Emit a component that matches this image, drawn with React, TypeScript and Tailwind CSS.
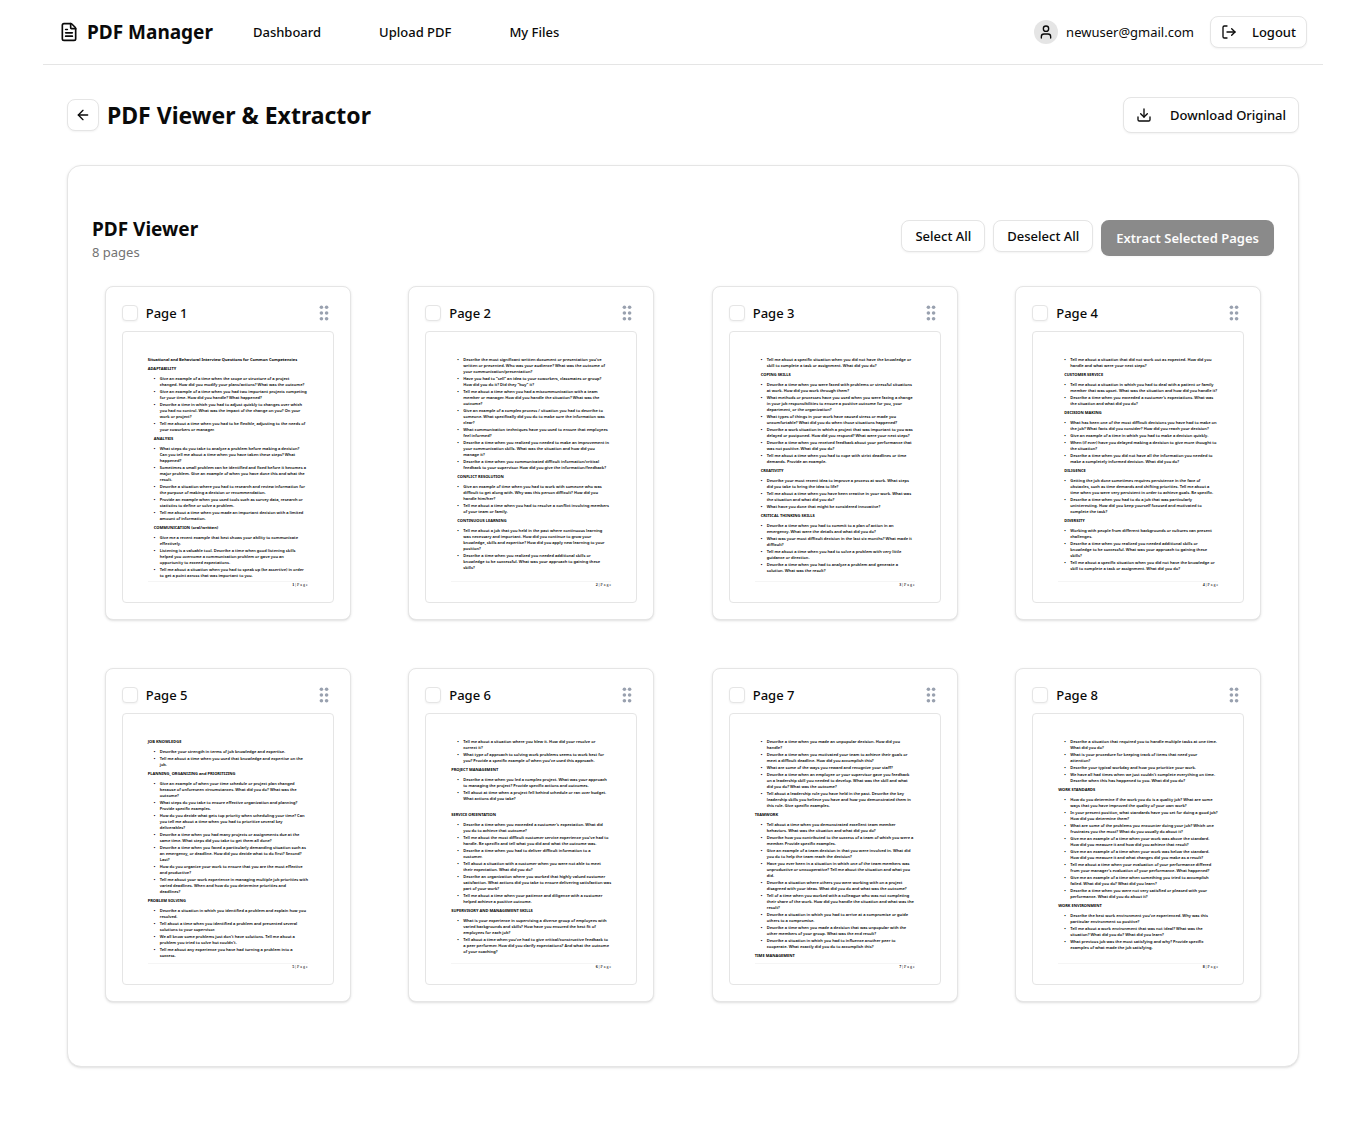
import { useState } from "react";
import { ArrowLeft, Download, FileText, LogOut, User } from "lucide-react";

type Block =
  | { kind: "heading"; text: string; indent?: boolean; spaced?: boolean }
  | { kind: "list"; items: string[][] };

type PageData = { number: number; blocks: Block[] };

const h = (text: string, indent = false, spaced = false): Block => ({ kind: "heading", text, indent, spaced });
const l = (...items: string[]): Block => ({ kind: "list", items: items.map((item) => item.split("\n")) });

const pages: PageData[] = [
  {
    number: 1,
    blocks: [
      h("Situational and Behavioral Interview Questions for Common Competencies"),
      h("ADAPTABILITY"),
      l(
        "Give an example of a time when the scope or structure of a project\nchanged. How did you modify your plans/actions? What was the outcome?",
        "Give an example of a time when you had two important projects competing\nfor your time. How did you handle? What happened?",
        "Describe a time in which you had to adjust quickly to changes over which\nyou had no control. What was the impact of the change on you? On your\nwork or project?",
        "Tell me about a time when you had to be flexible, adjusting to the needs of\nyour coworkers or manager."
      ),
      h("ANALYSIS", true),
      l(
        "What steps do you take to analyze a problem before making a decision?\nCan you tell me about a time when you have taken these steps? What\nhappened?",
        "Sometimes a small problem can be identified and fixed before it becomes a\nmajor problem. Give an example of when you have done this and what the\nresult.",
        "Describe a situation where you had to research and review information for\nthe purpose of making a decision or recommendation.",
        "Provide an example when you used tools such as survey data, research or\nstatistics to define or solve a problem.",
        "Tell me about a time when you made an important decision with a limited\namount of information."
      ),
      h("COMMUNICATION (oral/written)", true),
      l(
        "Give me a recent example that best shows your ability to communicate\neffectively.",
        "Listening is a valuable tool. Describe a time when good listening skills\nhelped you overcome a communication problem or gave you an\nopportunity to exceed expectations.",
        "Tell me about a situation when you had to speak up (be assertive) in order\nto get a point across that was important to you."
      ),
    ],
  },
  {
    number: 2,
    blocks: [
      l(
        "Describe the most significant written document or presentation you've\nwritten or presented. Who was your audience? What was the outcome of\nyour communication/presentation?",
        "Have you had to \"sell\" an idea to your coworkers, classmates or group?\nHow did you do it? Did they \"buy\" it?",
        "Tell me about a time when you had a miscommunication with a team\nmember or manager. How did you handle the situation? What was the\noutcome?",
        "Give an example of a complex process / situation you had to describe to\nsomeone. What specifically did you do to make sure the information was\nclear?",
        "What communication techniques have you used to ensure that employees\nfeel informed?",
        "Describe a time when you realized you needed to make an improvement in\nyour communication skills. What was the situation and how did you\nmanage it?",
        "Describe a time when you communicated difficult information/critical\nfeedback to your supervisor. How did you give the information/feedback?"
      ),
      h("CONFLICT RESOLUTION", true),
      l(
        "Give an example of time when you had to work with someone who was\ndifficult to get along with. Why was this person difficult? How did you\nhandle him/her?",
        "Tell me about a time when you had to resolve a conflict involving members\nof your team or family."
      ),
      h("CONTINUOUS LEARNING", true),
      l(
        "Tell me about a job that you held in the past where continuous learning\nwas necessary and important. How did you continue to grow your\nknowledge, skills and expertise? How did you apply new learning to your\nposition?",
        "Describe a time when you realized you needed additional skills or\nknowledge to be successful. What was your approach to gaining these\nskills?"
      ),
    ],
  },
  {
    number: 3,
    blocks: [
      l("Tell me about a specific situation when you did not have the knowledge or\nskill to complete a task or assignment. What did you do?"),
      h("COPING SKILLS", true),
      l(
        "Describe a time when you were faced with problems or stressful situations\nat work. How did you work through them?",
        "What methods or processes have you used when you were facing a change\nin your job responsibilities to ensure a positive outcome for you, your\ndepartment, or the organization?",
        "What types of things in your work have caused stress or made you\nuncomfortable? What did you do when those situations happened?",
        "Describe a work situation in which a project that was important to you was\ndelayed or postponed. How did you respond? What were your next steps?",
        "Describe a time when you received feedback about your performance that\nwas not positive. What did you do?",
        "Tell me about a time when you had to cope with strict deadlines or time\ndemands. Provide an example."
      ),
      h("CREATIVITY", true),
      l(
        "Describe your most recent idea to improve a process at work. What steps\ndid you take to bring the idea to life?",
        "Tell me about a time when you have been creative in your work. What was\nthe situation and what did you do?",
        "What have you done that might be considered innovative?"
      ),
      h("CRITICAL THINKING SKILLS", true),
      l(
        "Describe a time when you had to commit to a plan of action in an\nemergency. What were the details and what did you do?",
        "What was your most difficult decision in the last six months? What made it\ndifficult?",
        "Tell me about a time when you had to solve a problem with very little\nguidance or direction.",
        "Describe a time when you had to analyze a problem and generate a\nsolution. What was the result?"
      ),
    ],
  },
  {
    number: 4,
    blocks: [
      l("Tell me about a situation that did not work out as expected. How did you\nhandle and what were your next steps?"),
      h("CUSTOMER SERVICE", true),
      l(
        "Tell me about a situation in which you had to deal with a patient or family\nmember that was upset. What was the situation and how did you handle it?",
        "Describe a time when you exceeded a customer's expectations. What was\nthe situation and what did you do?"
      ),
      h("DECISION MAKING", true),
      l(
        "What has been one of the most difficult decisions you have had to make on\nthe job? What facts did you consider? How did you reach your decision?",
        "Give an example of a time in which you had to make a decision quickly.",
        "When (if ever) have you delayed making a decision to give more thought to\nthe situation?",
        "Describe a time when you did not have all the information you needed to\nmake a completely informed decision. What did you do?"
      ),
      h("DILIGENCE", true),
      l(
        "Getting the job done sometimes requires persistence in the face of\nobstacles, such as time demands and shifting priorities. Tell me about a\ntime when you were very persistent in order to achieve goals. Be specific.",
        "Describe a time when you had to do a job that was particularly\nuninteresting. How did you keep yourself focused and motivated to\ncomplete the task?"
      ),
      h("DIVERSITY", true),
      l(
        "Working with people from different backgrounds or cultures can present\nchallenges.",
        "Describe a time when you realized you needed additional skills or\nknowledge to be successful. What was your approach to gaining these\nskills?",
        "Tell me about a specific situation when you did not have the knowledge or\nskill to complete a task or assignment. What did you do?"
      ),
    ],
  },
  {
    number: 5,
    blocks: [
      h("JOB KNOWLEDGE"),
      l(
        "Describe your strength in terms of job knowledge and expertise.",
        "Tell me about a time when you used that knowledge and expertise on the\njob."
      ),
      h("PLANNING, ORGANIZING and PRIORITIZING"),
      l(
        "Give an example of when your time schedule or project plan changed\nbecause of unforeseen circumstances. What did you do? What was the\noutcome?",
        "What steps do you take to ensure effective organization and planning?\nProvide specific examples.",
        "How do you decide what gets top priority when scheduling your time? Can\nyou tell me about a time when you had to prioritize several key\ndeliverables?",
        "Describe a time when you had many projects or assignments due at the\nsame time. What steps did you take to get them all done?",
        "Describe a time when you faced a particularly demanding situation such as\nan emergency, or deadline. How did you decide what to do first? Second?\nLast?",
        "How do you organize your work to ensure that you are the most effective\nand productive?",
        "Tell me about your work experience in managing multiple job priorities with\nvaried deadlines. When and how do you determine priorities and\ndeadlines?"
      ),
      h("PROBLEM SOLVING"),
      l(
        "Describe a situation in which you identified a problem and explain how you\nresolved.",
        "Tell about a time when you identified a problem and presented several\nsolutions to your supervisor.",
        "We all know some problems just don't have solutions. Tell me about a\nproblem you tried to solve but couldn't.",
        "Tell me about any experience you have had turning a problem into a\nsuccess."
      ),
    ],
  },
  {
    number: 6,
    blocks: [
      l(
        "Tell me about a situation where you blew it. How did your resolve or\ncorrect it?",
        "What type of approach to solving work problems seems to work best for\nyou? Provide a specific example of when you've used this approach."
      ),
      h("PROJECT MANAGEMENT"),
      l(
        "Describe a time when you led a complex project. What was your approach\nto managing the project? Provide specific actions and outcomes.",
        "Tell about at time when a project fell behind schedule or ran over budget.\nWhat actions did you take?"
      ),
      h("SERVICE ORIENTATION", false, true),
      l(
        "Describe a time when you exceeded a customer's expectation. What did\nyou do to achieve that outcome?",
        "Tell me about the most difficult customer service experience you've had to\nhandle. Be specific and tell what you did and what the outcome was.",
        "Describe a time when you had to deliver difficult information to a\ncustomer.",
        "Tell about a situation with a customer when you were not able to meet\ntheir expectation. What did you do?",
        "Describe an organization where you worked that highly valued customer\nsatisfaction. What actions did you take to ensure delivering satisfaction was\npart of your work?",
        "Tell me about a time when your patience and diligence with a customer\nhelped achieve a positive outcome."
      ),
      h("SUPERVISORY AND MANAGEMENT SKILLS"),
      l(
        "What is your experience in supervising a diverse group of employees with\nvaried backgrounds and skills? How have you ensured the best fit of\nemployees for each job?",
        "Tell about a time when you've had to give critical/constructive feedback to\na peer performer. How did you clarify expectations? And what the outcome\nof your coaching?"
      ),
    ],
  },
  {
    number: 7,
    blocks: [
      l(
        "Describe a time when you made an unpopular decision. How did you\nhandle?",
        "Describe a time when you motivated your team to achieve their goals or\nmeet a difficult deadline. How did you accomplish this?",
        "What are some of the ways you reward and recognize your staff?",
        "Describe a time when an employee or your supervisor gave you feedback\non a leadership skill you needed to develop. What was the skill and what\ndid you do? What was the outcome?",
        "Tell about a leadership role you have held in the past. Describe the key\nleadership skills you believe you have and how you demonstrated them in\nthis role. Give specific examples."
      ),
      h("TEAMWORK"),
      l(
        "Tell about a time when you demonstrated excellent team member\nbehaviors. What was the situation and what did you do?",
        "Describe how you contributed to the success of a team of which you were a\nmember. Provide specific examples.",
        "Give an example of a team decision in that you were involved in. What did\nyou do to help the team reach the decision?",
        "Have you ever been in a situation in which one of the team members was\nunproductive or uncooperative? Tell me about the situation and what you\ndid.",
        "Describe a situation where others you were working with on a project\ndisagreed with your ideas. What did you do and what was the outcome?",
        "Tell of a time when you worked with a colleague who was not completing\ntheir share of the work. How did you handle the situation and what was the\nresult?",
        "Describe a situation in which you had to arrive at a compromise or guide\nothers to a compromise.",
        "Describe a time when you made a decision that was unpopular with the\nother members of your group. What was the end result?",
        "Describe a situation in which you had to influence another peer to\ncooperate. What exactly did you do to accomplish this?"
      ),
      h("TIME MANAGEMENT"),
    ],
  },
  {
    number: 8,
    blocks: [
      l(
        "Describe a situation that required you to handle multiple tasks at one time.\nWhat did you do?",
        "What is your procedure for keeping track of items that need your\nattention?",
        "Describe your typical workday and how you prioritize your work.",
        "We have all had times when we just couldn't complete everything on time.\nDescribe when this has happened to you. What did you do?"
      ),
      h("WORK STANDARDS"),
      l(
        "How do you determine if the work you do is a quality job? What are some\nways that you have improved the quality of your own work?",
        "In your present position, what standards have you set for doing a good job?\nHow did you determine them?",
        "What are some of the problems you encounter doing your job? Which one\nfrustrates you the most? What do you usually do about it?",
        "Give me an example of a time when your work was above the standard.\nHow did you measure it and how did you achieve that result?",
        "Give me an example of a time when your work was below the standard.\nHow did you measure it and what changes did you make as a result?",
        "Tell me about a time when your evaluation of your performance differed\nfrom your manager's evaluation of your performance. What happened?",
        "Give me an example of a time when something you tried to accomplish\nfailed. What did you do? What did you learn?",
        "Describe a time when you were not very satisfied or pleased with your\nperformance. What did you do about it?"
      ),
      h("WORK ENVIRONMENT"),
      l(
        "Describe the best work environment you've experienced. Why was this\nparticular environment so positive?",
        "Tell me about a work environment that was not ideal? What was the\nsituation? What did you do? What did you learn?",
        "What previous job was the most satisfying and why? Provide specific\nexamples of what made the job satisfying."
      ),
    ],
  },
];

function GripIcon() {
  return (
    <svg viewBox="0 0 20 20" className="size-5 text-gray-400" fill="currentColor" aria-hidden="true">
      {[4.3, 10, 15.7].map((y) => (
        <g key={y}>
          <circle cx="7.4" cy={y} r="1.8" />
          <circle cx="12.6" cy={y} r="1.8" />
        </g>
      ))}
    </svg>
  );
}

function PageSheet({ page }: { page: PageData }) {
  return (
    <div className="flex aspect-[212/272] flex-col overflow-hidden rounded-sm border border-neutral-200 bg-white px-[25px] pt-[25px] pb-[14px] font-['Noto_Sans',sans-serif] text-[4px] leading-[6px] font-bold text-black">
      {page.blocks.map((block, i) =>
        block.kind === "heading" ? (
          <p
            key={i}
            className={`whitespace-nowrap ${block.indent ? "pl-[6px]" : ""} ${
              i === 0 ? "" : block.spaced ? "mt-[10px]" : "mt-[3px]"
            }`}
          >
            {block.text}
          </p>
        ) : (
          <ul key={i} className={`flex flex-col gap-px ${i === 0 ? "" : "mt-[4px]"}`}>
            {block.items.map((lines, j) => (
              <li key={j} className="flex pl-[6px]">
                <span className="w-[6px] shrink-0">•</span>
                <span className="font-semibold whitespace-nowrap">
                  {lines.map((line) => (
                    <span key={line} className="block">
                      {line}
                    </span>
                  ))}
                </span>
              </li>
            ))}
          </ul>
        )
      )}
      <p className="mt-auto border-t border-neutral-100 text-right font-['Liberation_Serif',serif] font-normal">
        <b>{page.number}</b> | P a g e
      </p>
    </div>
  );
}

function PageCard({ page, checked, onToggle }: { page: PageData; checked: boolean; onToggle: () => void }) {
  const id = `page-${page.number}`;
  return (
    <article className="w-[246px] rounded-lg border border-neutral-200 bg-white p-4 shadow-sm">
      <div className="mb-2 flex h-5 items-center">
        <input
          id={id}
          type="checkbox"
          checked={checked}
          onChange={onToggle}
          className="size-4 appearance-none rounded-sm border border-neutral-200 bg-white shadow-xs checked:bg-neutral-900"
        />
        <label htmlFor={id} className="ml-2 text-[13px] leading-5 font-medium">
          Page {page.number}
        </label>
        <button type="button" aria-label={`Move page ${page.number}`} className="ml-auto">
          <GripIcon />
        </button>
      </div>
      <PageSheet page={page} />
    </article>
  );
}

const outline =
  "flex items-center justify-center rounded-lg border border-neutral-200 bg-white text-[13px] leading-5 font-medium whitespace-nowrap shadow-xs";

export default function App() {
  const [selected, setSelected] = useState<number[]>([]);
  const toggle = (n: number) =>
    setSelected((current) => (current.includes(n) ? current.filter((x) => x !== n) : [...current, n]));

  return (
    <div className="min-h-screen bg-white px-4 font-['Noto_Sans',sans-serif] text-neutral-950">
      <div className="mx-auto max-w-[1280px]">
        <header className="flex h-[65px] items-center border-b border-neutral-200 px-4">
          <a href="#" className="flex items-center gap-2 text-[19px] leading-7 font-bold">
            <FileText className="size-5" />
            PDF Manager
          </a>
          <nav className="ml-10 flex gap-[58px] text-[13px] leading-5 font-medium">
            <a href="#dashboard">Dashboard</a>
            <a href="#upload">Upload PDF</a>
            <a href="#files">My Files</a>
          </nav>
          <div className="ml-auto flex items-center gap-4">
            <div className="flex items-center gap-2 text-[13px] leading-5">
              <span className="flex size-6 items-center justify-center rounded-full bg-neutral-200">
                <User className="size-4" />
              </span>
              newuser@gmail.com
            </div>
            <button type="button" className={`${outline} h-8 gap-[15px] px-[10px]`}>
              <LogOut className="size-4" />
              Logout
            </button>
          </div>
        </header>

        <main className="px-6 pt-8 pb-16">
          <div className="flex items-center justify-between">
            <div className="flex items-center gap-2">
              <button type="button" aria-label="Back" className={`${outline} size-8`}>
                <ArrowLeft className="size-4" />
              </button>
              <h1 className="text-[23px] leading-9 font-bold">PDF Viewer &amp; Extractor</h1>
            </div>
            <button type="button" className={`${outline} h-9 gap-[18px] px-3`}>
              <Download className="size-4" />
              Download Original
            </button>
          </div>

          <section className="mt-8 rounded-[14px] border border-neutral-200 bg-white px-6 pt-[54px] pb-16 shadow-sm">
            <div className="mb-[26px] flex items-start justify-between">
              <div>
                <h2 className="text-[19px] leading-[18px] font-bold">PDF Viewer</h2>
                <p className="mt-1.5 text-[13px] leading-4 text-neutral-500">8 pages</p>
              </div>
              <div className="flex items-start gap-2">
                <button
                  type="button"
                  className={`${outline} h-8 px-[13px]`}
                  onClick={() => setSelected(pages.map((page) => page.number))}
                >
                  Select All
                </button>
                <button type="button" className={`${outline} h-8 px-[13px]`} onClick={() => setSelected([])}>
                  Deselect All
                </button>
                <button
                  type="button"
                  disabled={selected.length === 0}
                  className="h-9 rounded-lg bg-neutral-900 px-[15px] text-[13px] leading-5 font-semibold whitespace-nowrap text-neutral-50 shadow-xs disabled:opacity-50"
                >
                  Extract Selected Pages
                </button>
              </div>
            </div>
            <div className="grid grid-cols-4 justify-items-center gap-x-8 gap-y-12">
              {pages.map((page) => (
                <PageCard
                  key={page.number}
                  page={page}
                  checked={selected.includes(page.number)}
                  onToggle={() => toggle(page.number)}
                />
              ))}
            </div>
          </section>
        </main>
      </div>
    </div>
  );
}
